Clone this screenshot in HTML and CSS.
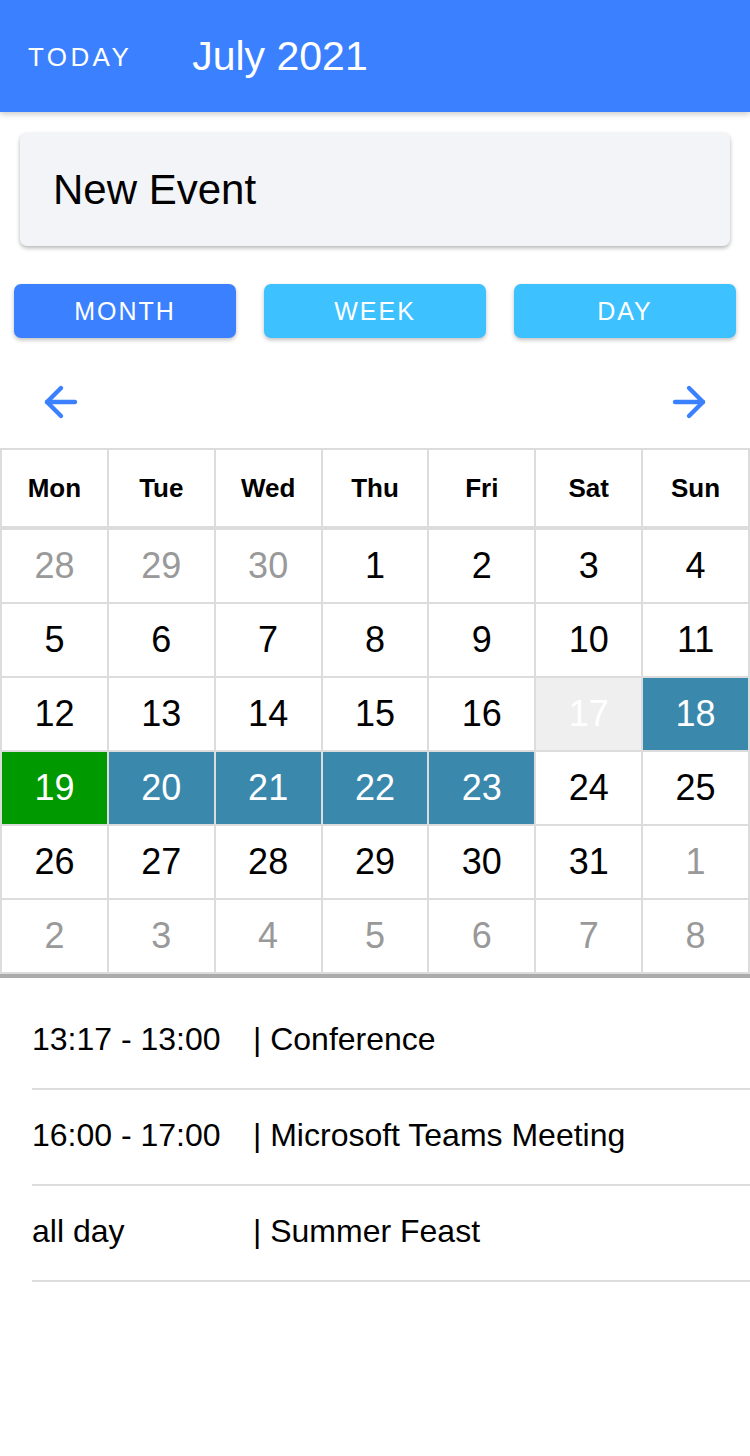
FILE: index.html
```html
<!DOCTYPE html>
<html lang="en">
<head>
<meta charset="utf-8">
<title>Calendar</title>
<link rel="stylesheet" href="styles.css">
</head>
<body>
<header class="topbar">
  <span class="today">TODAY</span>
  <span class="month-title">July 2021</span>
</header>

<div class="new-event">New Event</div>

<div class="views">
  <button class="view-btn active">MONTH</button>
  <button class="view-btn">WEEK</button>
  <button class="view-btn">DAY</button>
</div>

<nav class="nav">
  <svg class="arrow" viewBox="0 0 24 24" width="48" height="48" fill="none" stroke="currentColor" stroke-width="2.2" stroke-linecap="round" stroke-linejoin="round"><line x1="19" y1="12" x2="5" y2="12"/><polyline points="12 19 5 12 12 5"/></svg>
  <svg class="arrow" viewBox="0 0 24 24" width="48" height="48" fill="none" stroke="currentColor" stroke-width="2.2" stroke-linecap="round" stroke-linejoin="round"><line x1="5" y1="12" x2="19" y2="12"/><polyline points="12 5 19 12 12 19"/></svg>
</nav>

<section class="calendar">
  <div class="cal-head">
    <div class="hcell">Mon</div>
    <div class="hcell">Tue</div>
    <div class="hcell">Wed</div>
    <div class="hcell">Thu</div>
    <div class="hcell">Fri</div>
    <div class="hcell">Sat</div>
    <div class="hcell">Sun</div>
  </div>
  <div class="cal-body">
    <div class="day other">28</div>
    <div class="day other">29</div>
    <div class="day other">30</div>
    <div class="day">1</div>
    <div class="day">2</div>
    <div class="day">3</div>
    <div class="day">4</div>

    <div class="day">5</div>
    <div class="day">6</div>
    <div class="day">7</div>
    <div class="day">8</div>
    <div class="day">9</div>
    <div class="day">10</div>
    <div class="day">11</div>

    <div class="day">12</div>
    <div class="day">13</div>
    <div class="day">14</div>
    <div class="day">15</div>
    <div class="day">16</div>
    <div class="day muted">17</div>
    <div class="day event">18</div>

    <div class="day current">19</div>
    <div class="day event">20</div>
    <div class="day event">21</div>
    <div class="day event">22</div>
    <div class="day event">23</div>
    <div class="day">24</div>
    <div class="day">25</div>

    <div class="day">26</div>
    <div class="day">27</div>
    <div class="day">28</div>
    <div class="day">29</div>
    <div class="day">30</div>
    <div class="day">31</div>
    <div class="day other">1</div>

    <div class="day other">2</div>
    <div class="day other">3</div>
    <div class="day other">4</div>
    <div class="day other">5</div>
    <div class="day other">6</div>
    <div class="day other">7</div>
    <div class="day other">8</div>
  </div>
</section>

<ul class="events">
  <li class="event-item"><span class="time">13:17 - 13:00</span><span class="title">| Conference</span></li>
  <li class="event-item"><span class="time">16:00 - 17:00</span><span class="title">| Microsoft Teams Meeting</span></li>
  <li class="event-item"><span class="time">all day</span><span class="title">| Summer Feast</span></li>
</ul>
</body>
</html>
```

FILE: styles.css
```css
* {
  box-sizing: border-box;
}

html, body {
  margin: 0;
  padding: 0;
  background: #ffffff;
}

body {
  font-family: "Liberation Sans", Arial, sans-serif;
  color: #000;
  width: 750px;
}

.topbar {
  height: 112px;
  background: #3b81ff;
  display: flex;
  align-items: center;
  padding-left: 28px;
  color: #fff;
  box-shadow: 0 2px 6px rgba(0, 0, 0, 0.22);
  position: relative;
  z-index: 1;
}

.today {
  font-size: 26px;
  letter-spacing: 3.4px;
  margin-right: 60px;
  margin-top: 2px;
}

.month-title {
  font-size: 41px;
}

.new-event {
  margin: 21px 20px 0 20px;
  height: 113px;
  background: #f3f4f7;
  border-radius: 7px;
  box-shadow: 0 2px 4px rgba(0, 0, 0, 0.3);
  display: flex;
  align-items: center;
  padding-left: 33px;
  font-size: 42px;
  color: #000;
}

.views {
  display: grid;
  grid-template-columns: repeat(3, 222px);
  column-gap: 28px;
  padding: 0 14px;
  margin-top: 38px;
}

.view-btn {
  height: 54px;
  border: none;
  border-radius: 7px;
  background: #3ec1ff;
  color: #fff;
  font-family: "Liberation Sans", Arial, sans-serif;
  font-size: 25px;
  letter-spacing: 2px;
  box-shadow: 0 2px 4px rgba(0, 0, 0, 0.25);
  padding: 0;
}

.view-btn.active {
  background: #3b81ff;
}

.nav {
  display: flex;
  justify-content: space-between;
  padding: 40px 37px 0 37px;
  height: 110px;
  color: #3b81ff;
}

.arrow {
  display: block;
}

.calendar {
  background: #dcdcdc;
  padding: 2px;
  border-bottom: 4px solid #aaaaaa;
  display: flex;
  flex-direction: column;
  gap: 4px;
}

.cal-head,
.cal-body {
  display: grid;
  grid-template-columns: repeat(7, 1fr);
  gap: 2px;
}

.hcell {
  height: 76px;
  background: #fff;
  display: flex;
  align-items: center;
  justify-content: center;
  font-weight: bold;
  font-size: 26px;
}

.cal-body {
  grid-auto-rows: 72px;
}

.day {
  background: #fff;
  display: flex;
  align-items: center;
  justify-content: center;
  font-size: 36px;
  color: #000;
}

.day.other {
  color: #999999;
}

.day.muted {
  background: #efefef;
  color: #fff;
}

.day.event {
  background: #3b88ad;
  color: #fff;
}

.day.current {
  background: #009900;
  color: #fff;
}

.events {
  list-style: none;
  margin: 0;
  padding: 16px 0 0 32px;
}

.event-item {
  height: 96px;
  border-bottom: 2px solid #dcdcdc;
  display: flex;
  align-items: center;
  font-size: 32px;
  padding-bottom: 4px;
}

.time {
  width: 221px;
  flex-shrink: 0;
}
```
